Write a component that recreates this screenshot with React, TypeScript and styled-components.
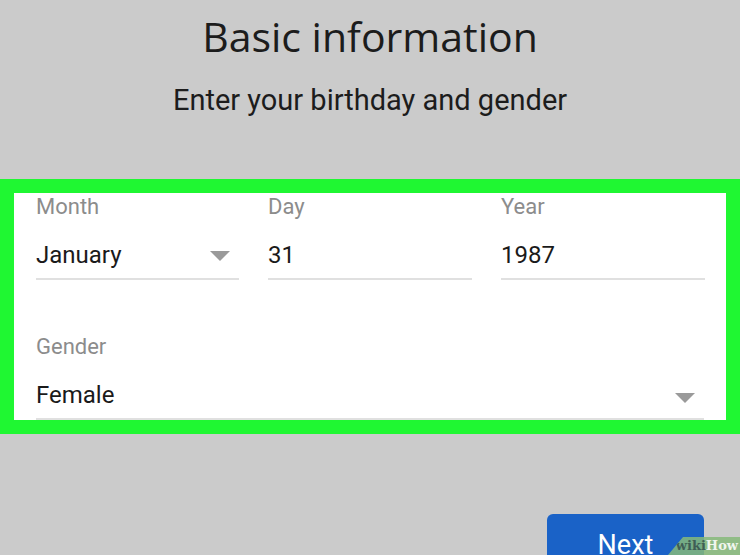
import React from "react";
import styled, { createGlobalStyle } from "styled-components";

const GlobalStyle = createGlobalStyle`
  html, body {
    margin: 0;
    padding: 0;
    background: #cbcbcb;
    overflow: hidden;
  }
  body {
    font-family: Roboto, "Liberation Sans", sans-serif;
  }
`;

const Page = styled.div`
  width: 740px;
  height: 555px;
  position: relative;
  overflow: hidden;
  display: flex;
  flex-direction: column;
  background: #cbcbcb;
`;

const Header = styled.header`
  display: flex;
  flex-direction: column;
  align-items: center;
  padding-top: 10px;
`;

const Title = styled.h1`
  margin: 0;
  font-family: "Open Sans", Roboto, sans-serif;
  font-weight: 400;
  font-size: 41px;
  line-height: 52px;
  color: #1c1c1c;
`;

const Subtitle = styled.p`
  margin: 21px 0 0;
  font-size: 29px;
  line-height: 34px;
  color: #1c1c1c;
`;

const Highlight = styled.section`
  margin-top: 62px;
  border: 14px solid #1ff732;
  background: #ffffff;
  height: 259px;
  box-sizing: border-box;
  padding: 1px 22px 0 22px;
  display: flex;
  flex-direction: column;
`;

const DateRow = styled.div`
  display: grid;
  grid-template-columns: 203px 204px 204px;
  column-gap: 29px;
`;

const Field = styled.div`
  display: flex;
  flex-direction: column;
`;

const Label = styled.span`
  font-size: 22px;
  line-height: 26px;
  color: #8c8c8c;
`;

const ValueLine = styled.div`
  display: flex;
  align-items: center;
  justify-content: space-between;
  padding: 20px 0 8px;
  border-bottom: 2px solid #e0e0e0;
`;

const Value = styled.span`
  font-size: 24px;
  line-height: 30px;
  color: #1a1a1a;
`;

const Caret = styled.span<{ $right: number; $down: number }>`
  width: 0;
  height: 0;
  border-left: 10px solid transparent;
  border-right: 10px solid transparent;
  border-top: 10px solid #9a9a9a;
  margin-right: ${(p) => p.$right}px;
  margin-top: ${(p) => p.$down}px;
`;

const GenderField = styled(Field)`
  margin-top: 54px;
  width: 668px;
`;

const Footer = styled.div`
  display: flex;
  justify-content: flex-end;
  padding-right: 36px;
  margin-top: 80px;
`;

const NextButton = styled.button`
  width: 157px;
  height: 60px;
  border: none;
  border-radius: 6px;
  background: #1a62c7;
  color: #ffffff;
  font-family: Roboto, sans-serif;
  font-size: 27px;
  font-weight: 400;
  line-height: 32px;
  padding: 15px 0 0;
  display: flex;
  justify-content: center;
  align-items: flex-start;
`;

const Watermark = styled.div`
  position: absolute;
  right: 0;
  bottom: 0;
  width: 72px;
  height: 18px;
  background: rgba(134, 186, 122, 0.85);
  clip-path: polygon(15px 0, 100% 0, 100% 100%, 0 100%);
  display: flex;
  align-items: center;
  justify-content: flex-end;
  padding-right: 2px;
  box-sizing: border-box;
  font-family: "DejaVu Serif", "Liberation Serif", serif;
  font-weight: 700;
  font-size: 13px;
  line-height: 18px;
`;

const WikiText = styled.span`
  color: #3f5e55;
`;

const HowText = styled.span`
  color: #f1f6ee;
`;

export default function App() {
  return (
    <Page>
      <GlobalStyle />
      <Header>
        <Title>Basic information</Title>
        <Subtitle>Enter your birthday and gender</Subtitle>
      </Header>
      <Highlight>
        <DateRow>
          <Field>
            <Label>Month</Label>
            <ValueLine>
              <Value>January</Value>
              <Caret $right={9} $down={2} />
            </ValueLine>
          </Field>
          <Field>
            <Label>Day</Label>
            <ValueLine>
              <Value>31</Value>
            </ValueLine>
          </Field>
          <Field>
            <Label>Year</Label>
            <ValueLine>
              <Value>1987</Value>
            </ValueLine>
          </Field>
        </DateRow>
        <GenderField>
          <Label>Gender</Label>
          <ValueLine>
            <Value>Female</Value>
            <Caret $right={9} $down={5} />
          </ValueLine>
        </GenderField>
      </Highlight>
      <Footer>
        <NextButton>Next</NextButton>
      </Footer>
      <Watermark>
        <WikiText>wiki</WikiText>
        <HowText>How</HowText>
      </Watermark>
    </Page>
  );
}
